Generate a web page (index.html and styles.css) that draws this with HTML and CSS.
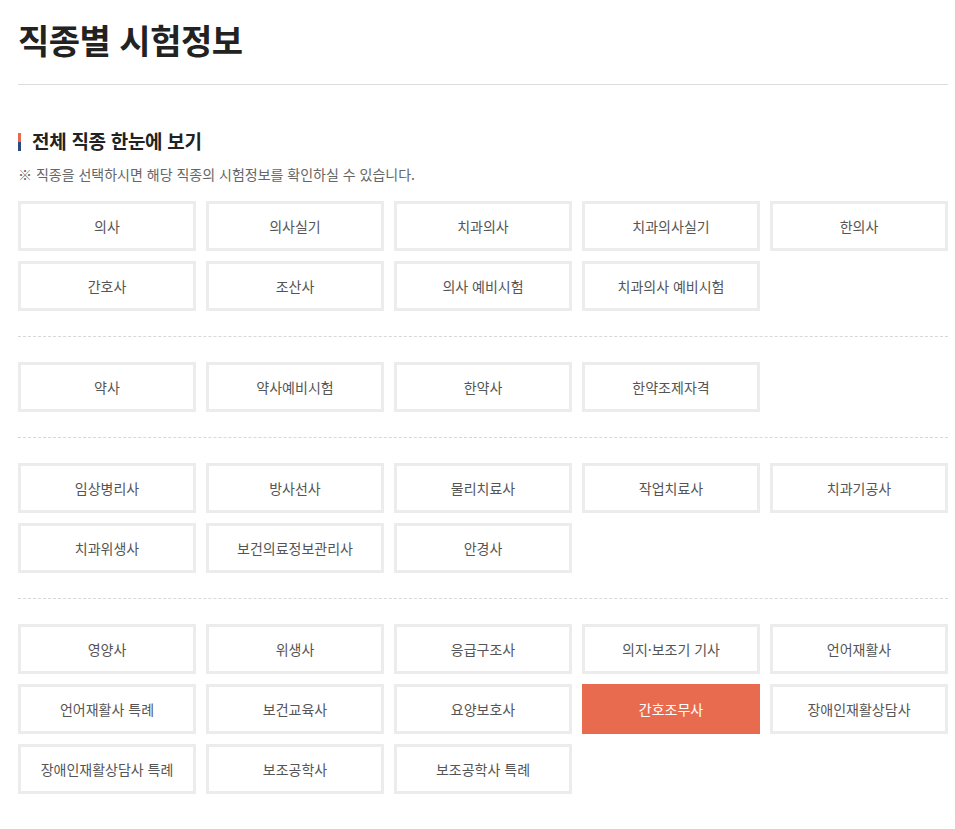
FILE: index.html
```html
<!DOCTYPE html>
<html lang="ko">
<head>
<meta charset="utf-8">
<title>직종별 시험정보</title>
<link rel="stylesheet" href="styles.css">
</head>
<body>
<div class="page">
  <h1 class="title">직종별 시험정보</h1>
  <h2 class="sub">전체 직종 한눈에 보기</h2>
  <p class="note">※ 직종을 선택하시면 해당 직종의 시험정보를 확인하실 수 있습니다.</p>
  <div class="group">
    <a class="btn">의사</a><a class="btn">의사실기</a><a class="btn">치과의사</a><a class="btn">치과의사실기</a><a class="btn">한의사</a>
    <a class="btn">간호사</a><a class="btn">조산사</a><a class="btn">의사 예비시험</a><a class="btn">치과의사 예비시험</a>
  </div>
  <div class="group">
    <a class="btn">약사</a><a class="btn">약사예비시험</a><a class="btn">한약사</a><a class="btn">한약조제자격</a>
  </div>
  <div class="group">
    <a class="btn">임상병리사</a><a class="btn">방사선사</a><a class="btn">물리치료사</a><a class="btn">작업치료사</a><a class="btn">치과기공사</a>
    <a class="btn">치과위생사</a><a class="btn">보건의료정보관리사</a><a class="btn">안경사</a>
  </div>
  <div class="group">
    <a class="btn">영양사</a><a class="btn">위생사</a><a class="btn">응급구조사</a><a class="btn">의지·보조기 기사</a><a class="btn">언어재활사</a>
    <a class="btn">언어재활사 특례</a><a class="btn">보건교육사</a><a class="btn">요양보호사</a><a class="btn active">간호조무사</a><a class="btn">장애인재활상담사</a>
    <a class="btn">장애인재활상담사 특례</a><a class="btn">보조공학사</a><a class="btn">보조공학사 특례</a>
  </div>
</div>
</body>
</html>
```
FILE: styles.css
```css
* { box-sizing: border-box; }
html, body { margin: 0; padding: 0; background: #fff; }
body {
  font-family: "Noto Sans CJK KR", "Noto Sans", sans-serif;
  color: #222;
}
.page {
  width: 948px;
  padding: 0 0 0 18px;
}
.title {
  margin: 0;
  padding-top: 16px;
  height: 85px;
  font-size: 34px;
  line-height: 48px;
  font-weight: 700;
  color: #222;
  letter-spacing: -0.5px;
  border-bottom: 1px solid #dcdcdc;
}
.sub {
  position: relative;
  margin: 41px 0 0;
  padding-left: 14px;
  font-size: 19px;
  line-height: 30px;
  font-weight: 700;
  color: #222;
  letter-spacing: -0.3px;
}
.sub::before {
  content: "";
  position: absolute;
  left: 0;
  top: 7px;
  width: 3px;
  height: 18px;
  background: linear-gradient(#e8694f 0 50%, #2d4a7c 50% 100%);
}
.note {
  margin: 8px 0 0;
  font-size: 14px;
  line-height: 20px;
  color: #666;
}
.group {
  display: grid;
  grid-template-columns: repeat(5, 178px);
  gap: 10px;
  padding: 25px 0 25px;
  border-bottom: 1px dashed #d8d8d8;
}
.group:first-of-type { padding-top: 17px; }
.group:last-child { border-bottom: 0; }
.btn {
  display: flex;
  align-items: center;
  justify-content: center;
  height: 50px;
  border: 3px solid #ececec;
  background: #fff;
  font-size: 14px;
  color: #555;
  text-decoration: none;
  cursor: pointer;
}
.btn.active {
  background: #e96b4f;
  border-color: #e96b4f;
  color: #fff;
}
```
